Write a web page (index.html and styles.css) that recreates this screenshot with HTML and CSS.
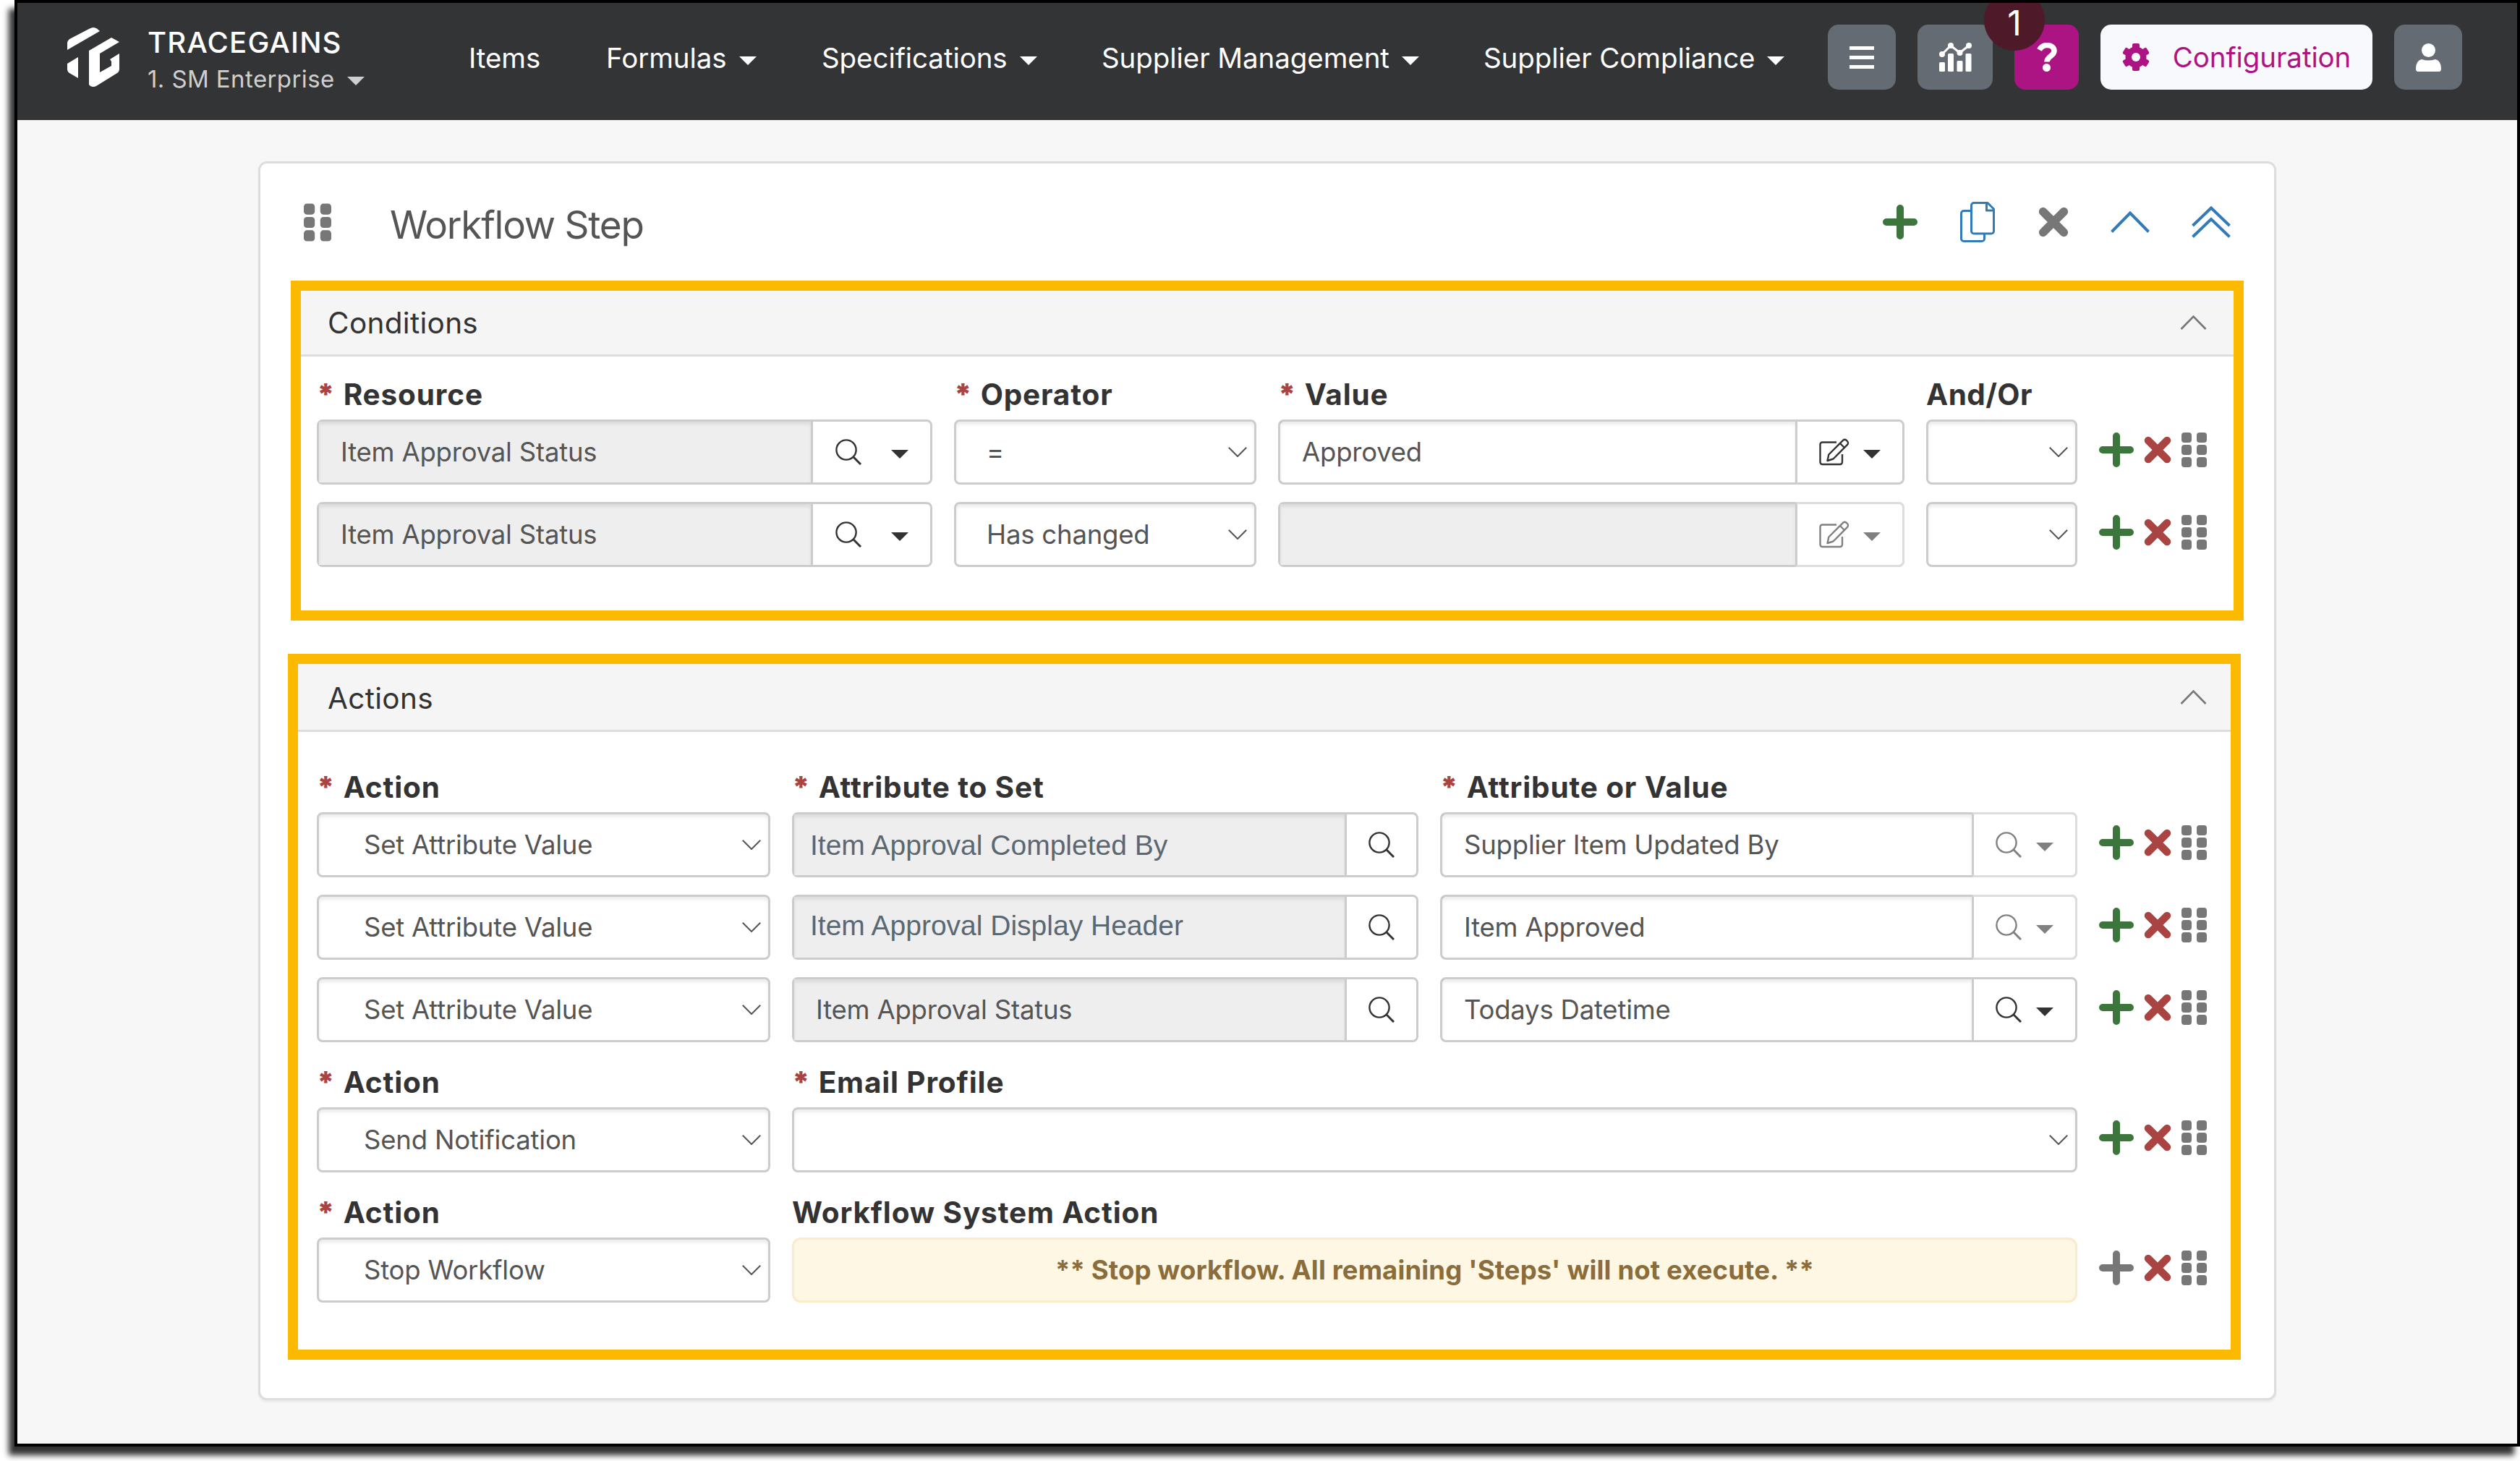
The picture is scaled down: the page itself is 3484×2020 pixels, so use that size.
FILE: index.html
```html
<!DOCTYPE html>
<html lang="en">
<head>
<meta charset="utf-8">
<title>Workflow Step</title>
<link rel="stylesheet" href="styles.css">
</head>
<body>
<svg class="sprite" aria-hidden="true">
  <symbol id="plus" viewBox="0 0 48 48"><path d="M24 5v38M5 24h38" fill="none" stroke="currentColor" stroke-width="10" stroke-linecap="round"/></symbol>
  <symbol id="cross" viewBox="0 0 38 38"><path d="M6 6l26 26M32 6L6 32" fill="none" stroke="currentColor" stroke-width="10.5" stroke-linecap="round"/></symbol>
  <symbol id="grip" viewBox="0 0 35 48"><g fill="currentColor"><rect width="14" height="14" rx="4"/><rect x="21" width="14" height="14" rx="4"/><rect y="17" width="14" height="14" rx="4"/><rect x="21" y="17" width="14" height="14" rx="4"/><rect y="34" width="14" height="14" rx="4"/><rect x="21" y="34" width="14" height="14" rx="4"/></g></symbol>
  <symbol id="caret" viewBox="0 0 24 12"><path d="M0 0h24L12 12z" fill="currentColor"/></symbol>
  <symbol id="search" viewBox="0 0 36 36"><g fill="none" stroke="currentColor" stroke-width="2.4"><circle cx="15" cy="15" r="13.6"/><path d="M25 25l10 10" stroke-width="3"/></g></symbol>
  <symbol id="down" viewBox="0 0 26 14"><path d="M.8 .8L13 13 25.200 .8" fill="none" stroke="currentColor" stroke-width="2"/></symbol>
  <symbol id="up" viewBox="0 0 54 30"><path d="M1.500 28.500L27 2.500l25.500 26" fill="none" stroke="currentColor" stroke-width="4"/></symbol>
  <symbol id="edit" viewBox="0 0 42 38"><g fill="none" stroke="currentColor" stroke-width="2.4" stroke-linejoin="round"><path d="M24 5.500H4.500a3 3 0 0 0-3 3V33a3 3 0 0 0 3 3H29a3 3 0 0 0 3-3V22"/><path d="M11.500 31l1.800-8.500L33 2.800a3.400 3.400 0 0 1 4.800 0l1.200 1.200a3.400 3.400 0 0 1 0 4.800L19.500 28.500zM29 7l6 6"/></g></symbol>
  <symbol id="copy" viewBox="0 0 48 56"><g fill="none" stroke="currentColor" stroke-width="3" stroke-linejoin="round"><path d="M15 12.500H5a3.500 3.500 0 0 0-3.500 3.500v35A3.500 3.500 0 0 0 5 54.500h25a3.500 3.500 0 0 0 3.500-3.500v-6.500"/><path d="M19 1.500h19L46.500 10v30.500a3.500 3.500 0 0 1-3.500 3.500H19a3.500 3.500 0 0 1-3.500-3.500V5A3.500 3.500 0 0 1 19 1.500zM36.500 2v10h10"/></g></symbol>
</svg>

<div class="window">
  <header class="topbar">
    <svg class="logo" viewBox="0 0 72 82" fill="#fff"><path d="M0 31V22q0-4 4-6.500L31 1.500Q36-1.500 41 1.500L45 5z"/><path d="M0 50l15-9v29L3 63q-3-2-3-6z"/><path d="M30 32L61 14l11 6-27 16v26l16-9v-6l-2-3 13-8v21q0 4-3 6L40 81q-4 2-8 0l-2-2z"/></svg>
    <div class="brand">
      <div class="brand-name">TRACEGAINS</div>
      <div class="brand-org"><span>1. SM Enterprise</span><svg class="caret"><use href="#caret"/></svg></div>
    </div>
    <nav class="nav">
      <a><span>Items</span></a>
      <a><span>Formulas</span><svg class="caret"><use href="#caret"/></svg></a>
      <a><span>Specifications</span><svg class="caret"><use href="#caret"/></svg></a>
      <a><span>Supplier Management</span><svg class="caret"><use href="#caret"/></svg></a>
      <a><span>Supplier Compliance</span><svg class="caret"><use href="#caret"/></svg></a>
    </nav>
    <div class="tools">
      <button class="tool tool-menu"><svg width="34" height="31" viewBox="0 0 34 31"><path d="M0 2.500h34M0 15.500h34M0 28.500h34" stroke="#fff" stroke-width="5"/></svg></button>
      <button class="tool tool-chart"><svg width="45" height="40" viewBox="0 0 45 40"><g fill="#fff"><rect y="27" width="8" height="13" rx="1.500"/><rect x="12" y="15" width="8" height="25" rx="1.500"/><rect x="24.500" y="25" width="8" height="15" rx="1.500"/><rect x="36.500" y="15" width="8" height="25" rx="1.500"/><circle cx="4" cy="16" r="4"/><circle cx="16" cy="4" r="4"/><circle cx="28.500" cy="14" r="4"/><circle cx="41" cy="4" r="4"/></g><path d="M4 16L16 4l12.500 10L41 4" fill="none" stroke="#fff" stroke-width="3"/></svg></button>
      <button class="tool tool-help"><svg width="28" height="40" viewBox="0 0 28 40"><path d="M3.500 10Q7 3.500 14 3.500c6 0 10 3 10 8 0 7-10 7-10 15" fill="none" stroke="#fff" stroke-width="7.500"/><circle cx="13.500" cy="34.500" r="5.500" fill="#fff"/></svg><span class="badge">1</span></button>
      <button class="tool tool-config"><svg width="38" height="38" viewBox="-19 -19 38 38"><g fill="#ad1483"><circle r="14.500"/><rect x="-5" y="-19" width="10" height="38" rx="2"/><rect x="-5" y="-19" width="10" height="38" rx="2" transform="rotate(60)"/><rect x="-5" y="-19" width="10" height="38" rx="2" transform="rotate(120)"/></g><circle r="6" fill="#f8f9fc"/></svg><span>Configuration</span></button>
      <button class="tool tool-user"><svg width="35" height="39" viewBox="0 0 35 39" fill="#fff"><circle cx="17.500" cy="9.500" r="9.500"/><path d="M8 22q9.500 3 19 0 8 2 8 13 0 4-3 4H3q-3 0-3-4 0-11 8-13z"/></svg></button>
    </div>
  </header>

  <main class="card">
    <div class="card-head">
      <svg class="card-grip"><use href="#grip"/></svg>
      <h1>Workflow Step</h1>
      <div class="step-tools">
        <svg class="st-plus green"><use href="#plus"/></svg>
        <svg class="st-copy"><use href="#copy"/></svg>
        <svg class="st-cross gray"><use href="#cross"/></svg>
        <svg class="st-up"><use href="#up"/></svg>
        <svg class="st-upup" viewBox="0 0 54 44"><path d="M1.500 27L27 2.500 52.500 27M1.500 42.500L27 18l25.500 24.500" fill="none" stroke="currentColor" stroke-width="4"/></svg>
      </div>
    </div>

    <section class="panel conditions">
      <div class="panel-head"><h2>Conditions</h2><svg class="fold"><use href="#up"/></svg></div>
      <div class="panel-body">
        <div class="labels cond-grid">
          <label class="req"><span>Resource</span></label>
          <label class="req"><span>Operator</span></label>
          <label class="req"><span>Value</span></label>
          <label class="tight"><span>And/Or</span></label>
        </div>
        <div class="rows">
          <div class="row cond-grid">
            <div class="field"><div class="input off">Item Approval Status</div><div class="addon a-res"><svg class="i-search"><use href="#search"/></svg><svg class="caret"><use href="#caret"/></svg></div></div>
            <div class="field select">=<svg class="down"><use href="#down"/></svg></div>
            <div class="field"><div class="input">Approved</div><div class="addon a-edit"><svg class="i-edit"><use href="#edit"/></svg><svg class="caret"><use href="#caret"/></svg></div></div>
            <div class="field select"><svg class="down"><use href="#down"/></svg></div>
            <div class="acts"><svg class="a-plus green"><use href="#plus"/></svg><svg class="a-cross"><use href="#cross"/></svg><svg class="a-grip"><use href="#grip"/></svg></div>
          </div>
          <div class="row cond-grid">
            <div class="field"><div class="input off">Item Approval Status</div><div class="addon a-res"><svg class="i-search"><use href="#search"/></svg><svg class="caret"><use href="#caret"/></svg></div></div>
            <div class="field select">Has changed<svg class="down"><use href="#down"/></svg></div>
            <div class="field"><div class="input off"></div><div class="addon a-edit muted"><svg class="i-edit"><use href="#edit"/></svg><svg class="caret"><use href="#caret"/></svg></div></div>
            <div class="field select"><svg class="down"><use href="#down"/></svg></div>
            <div class="acts"><svg class="a-plus green"><use href="#plus"/></svg><svg class="a-cross"><use href="#cross"/></svg><svg class="a-grip"><use href="#grip"/></svg></div>
          </div>
        </div>
      </div>
    </section>

    <section class="panel actions">
      <div class="panel-head"><h2>Actions</h2><svg class="fold"><use href="#up"/></svg></div>
      <div class="panel-body">
        <div class="labels act-grid">
          <label class="req"><span>Action</span></label>
          <label class="req"><span>Attribute to Set</span></label>
          <label class="req"><span>Attribute or Value</span></label>
        </div>
        <div class="rows">
          <div class="row act-grid">
            <div class="field select">Set Attribute Value<svg class="down"><use href="#down"/></svg></div>
            <div class="field"><div class="input off typed">Item Approval Completed By</div><div class="addon a-one"><svg class="i-search"><use href="#search"/></svg></div></div>
            <div class="field"><div class="input">Supplier Item Updated By</div><div class="addon a-val muted"><svg class="i-search"><use href="#search"/></svg><svg class="caret"><use href="#caret"/></svg></div></div>
            <div class="acts"><svg class="a-plus green"><use href="#plus"/></svg><svg class="a-cross"><use href="#cross"/></svg><svg class="a-grip"><use href="#grip"/></svg></div>
          </div>
          <div class="row act-grid">
            <div class="field select">Set Attribute Value<svg class="down"><use href="#down"/></svg></div>
            <div class="field"><div class="input off typed typed-up">Item Approval Display Header</div><div class="addon a-one"><svg class="i-search"><use href="#search"/></svg></div></div>
            <div class="field"><div class="input">Item Approved</div><div class="addon a-val muted"><svg class="i-search"><use href="#search"/></svg><svg class="caret"><use href="#caret"/></svg></div></div>
            <div class="acts"><svg class="a-plus green"><use href="#plus"/></svg><svg class="a-cross"><use href="#cross"/></svg><svg class="a-grip"><use href="#grip"/></svg></div>
          </div>
          <div class="row act-grid">
            <div class="field select">Set Attribute Value<svg class="down"><use href="#down"/></svg></div>
            <div class="field"><div class="input off">Item Approval Status</div><div class="addon a-one"><svg class="i-search"><use href="#search"/></svg></div></div>
            <div class="field"><div class="input">Todays Datetime</div><div class="addon a-val"><svg class="i-search"><use href="#search"/></svg><svg class="caret"><use href="#caret"/></svg></div></div>
            <div class="acts"><svg class="a-plus green"><use href="#plus"/></svg><svg class="a-cross"><use href="#cross"/></svg><svg class="a-grip"><use href="#grip"/></svg></div>
          </div>
        </div>
        <div class="labels wide-grid later">
          <label class="req"><span>Action</span></label>
          <label class="req"><span>Email Profile</span></label>
        </div>
        <div class="row wide-grid">
          <div class="field select">Send Notification<svg class="down"><use href="#down"/></svg></div>
          <div class="field select"><svg class="down"><use href="#down"/></svg></div>
          <div class="acts"><svg class="a-plus green"><use href="#plus"/></svg><svg class="a-cross"><use href="#cross"/></svg><svg class="a-grip"><use href="#grip"/></svg></div>
        </div>
        <div class="labels wide-grid later">
          <label class="req"><span>Action</span></label>
          <label><span>Workflow System Action</span></label>
        </div>
        <div class="row wide-grid">
          <div class="field select">Stop Workflow<svg class="down"><use href="#down"/></svg></div>
          <div class="notice">** Stop workflow. All remaining 'Steps' will not execute. **</div>
          <div class="acts"><svg class="a-plus gray"><use href="#plus"/></svg><svg class="a-cross"><use href="#cross"/></svg><svg class="a-grip"><use href="#grip"/></svg></div>
        </div>
      </div>
    </section>
  </main>
</div>
</body>
</html>
```

FILE: styles.css
```css
* { box-sizing: border-box; }
body { margin: 0; padding-left: 20px; background: #fff; width: 3484px; height: 2020px; overflow: hidden; font-family: Inter, "Liberation Sans", sans-serif; color: #333; }
h1, h2 { margin: 0; font-weight: 400; }
svg { display: block; flex: none; }
.sprite { position: absolute; width: 0; height: 0; }
.window { width: 3464px; height: 2000px; border: 4px solid #000; background: #f7f7f7; box-shadow: -8px 12px 8px rgba(0, 0, 0, .8); }
.green { color: #3c763d; }
.gray { color: #777; }
.caret { width: 24px; height: 12px; }

/* top bar */
.topbar { display: flex; align-items: flex-start; height: 162px; padding: 30px 76px 0 69px; background: #333436; color: #fff; }
.logo { width: 72px; height: 82px; margin-top: 4px; }
.brand { width: 444px; margin-left: 39px; flex: none; }
.brand-name { margin-top: 4px; font-size: 40px; line-height: 42px; font-weight: 500; letter-spacing: 1.2px; }
.brand-org { display: flex; align-items: center; margin-top: 8px; font-size: 33px; line-height: 42px; letter-spacing: .4px; color: #cfcfcf; }
.brand-org .caret { margin: 5px 0 0 17px; }
.nav { display: grid; grid-template-columns: 190px 298px 387px 528px 475px; font-size: 38.500px; line-height: 92px; letter-spacing: -.08px; }
.nav a { display: flex; align-items: center; white-space: nowrap; }
.nav .caret { margin: 8px 0 0 17px; }
.tools { display: flex; gap: 30px; margin-left: auto; }
.tool { display: flex; align-items: center; justify-content: center; height: 90px; padding: 0; border: 0; border-radius: 15px; background: #646b73; font: inherit; }
.tool-menu { width: 94px; }
.tool-chart { width: 104px; }
.tool-help { position: relative; width: 89px; background: #ad1483; }
.tool-config { width: 376px; background: #f8f9fc; color: #ad1483; font-size: 38.500px; gap: 32px; letter-spacing: -.1px; line-height: 92px; }
.tool-user { width: 94px; }
.badge { position: absolute; left: -42px; top: -30px; width: 84px; height: 66px; background: radial-gradient(circle at 42px 24px, #4e1a29 41.500px, transparent 42.500px); color: #fff; font-size: 48px; line-height: 55px; text-align: center; }

/* step card */
.card { width: 2790px; height: 1713px; margin: 57px 0 0 333px; border: 3px solid #ddd; border-radius: 12px; background: #fff; box-shadow: 0 3px 3px rgba(0, 0, 0, .05); }
.card-head { display: flex; align-items: center; height: 162px; padding: 0 60px 0 60px; }
.card-grip { width: 38px; height: 53px; color: #777; }
.card-head h1 { margin: 7px 0 0 81px; font-size: 53px; letter-spacing: -1.250px; color: #555; }
.step-tools { display: flex; align-items: center; margin: -1px 0 0 auto; color: #337ab7; }
.st-plus { width: 48px; height: 48px; margin-right: 59px; }
.st-copy { width: 48px; height: 56px; margin-right: 60px; }
.st-cross { width: 42px; height: 42px; margin-right: 58px; }
.st-up { width: 54px; height: 30px; margin-right: 58px; }
.st-upup { width: 54px; height: 44px; }

/* highlighted panels */
.panel { width: 2700px; border: 14px solid #fbb900; background: #fff; }
.conditions { height: 470px; margin-left: 42px; }
.actions { height: 976px; margin: 46px 0 0 38px; }
.panel-head { display: flex; align-items: center; justify-content: space-between; height: 91px; border-bottom: 3px solid #ddd; background: #f5f5f5; padding: 0 37px 0 37px; }
.actions .panel-head { height: 94px; padding: 0 33px 0 41px; }
.actions .panel-head h2 { margin-top: 3px; }
.panel-head h2 { font-size: 40.500px; letter-spacing: .3px; }
.fold { width: 37px; height: 20px; color: #777; }
.conditions .panel-body { padding: 18px 0 0 22px; }
.actions .panel-body { padding: 42px 0 0 26px; }

.cond-grid { display: grid; grid-template-columns: 881px 448px 896px 239px auto; }
.act-grid { display: grid; grid-template-columns: 657px 896px 911px auto; }
.wide-grid { display: grid; grid-template-columns: 657px 1807px auto; }
.labels { height: 69px; line-height: 69px; font-size: 40.500px; font-weight: 700; letter-spacing: .85px; }
.labels.later { margin-top: 21px; }
.req::before { content: "*"; margin-right: 12px; font-weight: 900; letter-spacing: 0; color: #a94442; }
.tight { letter-spacing: .4px; }
.rows { display: flex; flex-direction: column; gap: 24px; }
.row { height: 90px; font-size: 36.500px; letter-spacing: -.2px; color: #555; }
.field { display: flex; height: 90px; margin-right: 30px; border: 3px solid #ccc; border-radius: 8px; line-height: 84px; white-space: nowrap; background: #fff; }
.input { flex: 1; padding-left: 30px; box-shadow: inset 0 4px 4px rgba(0, 0, 0, .075); }
.off { background-color: #eee; }
.select { align-items: center; justify-content: flex-end; padding: 0 10px 0 62px; box-shadow: inset 0 4px 4px rgba(0, 0, 0, .075); }
.cond-grid .select { padding-left: 42px; }
.select .down { width: 26px; height: 14px; margin-left: auto; }
.typed { padding-left: 22px; font-family: "Liberation Sans", Arial, sans-serif; font-size: 39px; letter-spacing: 0; line-height: 86px; color: #5a6872; }
.typed-up { line-height: 80px; }
.addon { display: flex; align-items: center; border-left: 3px solid #ccc; color: #333; }
.addon .caret { margin-top: 5px; }
.i-search { width: 36px; height: 36px; }
.i-edit { width: 42px; height: 38px; }
.a-res { width: 165px; padding-left: 31px; gap: 41px; }
.a-edit { width: 148px; padding-left: 30px; gap: 19px; }
.a-one { width: 99px; padding-left: 30px; }
.a-val { width: 143px; padding-left: 30px; gap: 20px; }
.muted { margin: -3px -3px -3px 0; border: 3px solid #ddd; border-left-color: #ccc; border-radius: 0 8px 8px 0; background: #fff; color: #808080; }
.a-edit.muted { width: 151px; }
.a-val.muted { width: 146px; }
.acts { display: flex; align-items: center; height: 83px; }
.a-plus { width: 48px; height: 48px; }
.a-cross { width: 38px; height: 38px; margin: 0 14px; color: #a94442; }
.a-grip { width: 35px; height: 48px; color: #777; }
.notice { margin-right: 30px; border: 3px solid #faebcc; border-radius: 12px; background: #fef7e3; color: #8a6d3b; font-weight: 700; font-size: 36.500px; letter-spacing: .13px; line-height: 84px; text-align: center; }
```
